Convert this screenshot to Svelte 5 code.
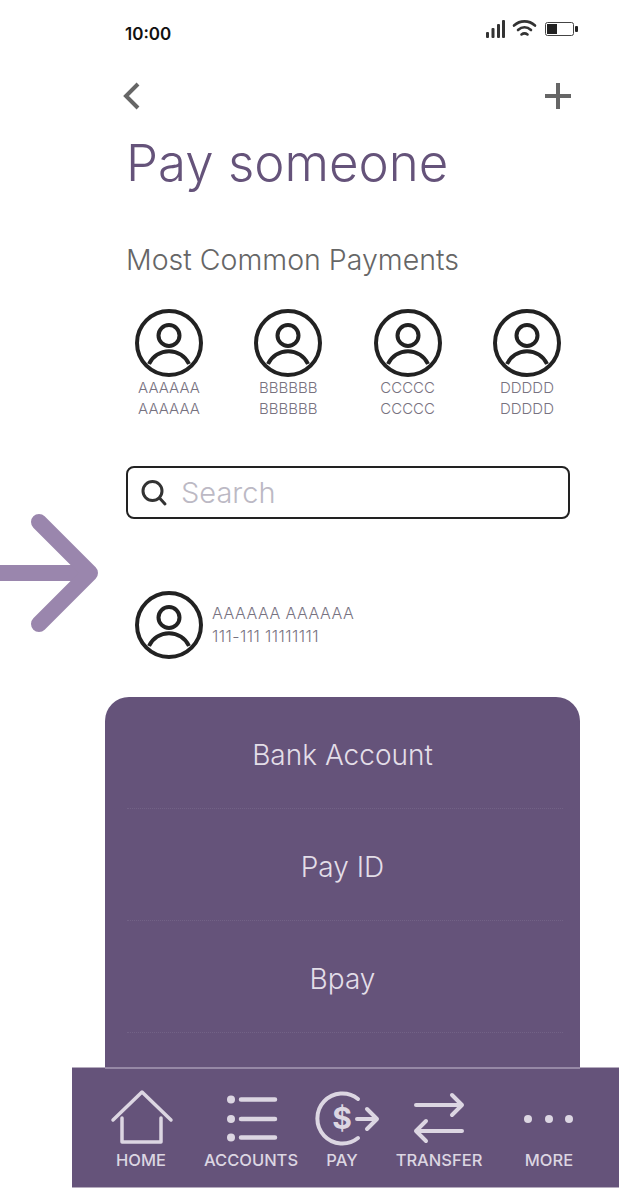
<script>
	const favourites = [
		{ name: "AAAAAA" },
		{ name: "BBBBBB" },
		{ name: "CCCCC" },
		{ name: "DDDDD" },
	];
	const methods = ["Bank Account", "Pay ID", "Bpay"];
</script>

{#snippet avatar()}
	<svg class="avatar" viewBox="0 0 68 68" fill="none" stroke="#222" stroke-width="4">
		<circle cx="34" cy="34" r="32" />
		<circle cx="34" cy="26.5" r="10.5" />
		<path d="M14 55 A22 22 0 0 1 54 55" />
	</svg>
{/snippet}

<div class="screen">
	<svg class="pointer" viewBox="0 0 100 120" fill="none" stroke="#9a86ad" stroke-width="16" stroke-linecap="round" stroke-linejoin="round">
		<path d="M0 59 H88" stroke-linecap="butt" />
		<path d="M39 8 L90 59 L39 110" />
	</svg>

	<div class="status">
		<span class="time">10:00</span>
		<svg class="status-icons" viewBox="0 0 94 20" fill="none">
			<g fill="#333">
				<rect x="0" y="12" width="3" height="6" rx="1" />
				<rect x="5.5" y="8" width="3" height="10" rx="1" />
				<rect x="11" y="4" width="3" height="14" rx="1" />
				<rect x="16" y="0" width="3" height="18" rx="1" />
			</g>
			<g stroke="#333" stroke-width="2.6" stroke-linecap="round">
				<path d="M28 5.5 C34 0 43 0 49 5.5" />
				<path d="M32 10 C36 6.5 41 6.5 45 10" />
				<path d="M35.5 14.5 C37.5 13 39.5 13 41.5 14.5" />
			</g>
			<rect x="59.5" y="2.5" width="28" height="13" rx="2" stroke="#444" />
			<rect x="61" y="4" width="10" height="10" fill="#222" />
			<rect x="89" y="6" width="3" height="6" rx="1" fill="#222" />
		</svg>
	</div>

	<main class="content">
		<div class="topbar">
			<svg width="18" height="28" viewBox="0 0 18 28" fill="none" stroke="#666" stroke-width="4">
				<path d="M15 2 L3 14 L15 26" />
			</svg>
			<svg width="26" height="26" viewBox="0 0 26 26" fill="none" stroke="#666" stroke-width="4">
				<path d="M13 0 V26 M0 13 H26" />
			</svg>
		</div>

		<h1>Pay someone</h1>
		<h2>Most Common Payments</h2>

		<div class="favourites">
			{#each favourites as f}
				<div class="favourite">
					{@render avatar()}
					<span>{f.name}</span>
					<span>{f.name}</span>
				</div>
			{/each}
		</div>

		<div class="search">
			<svg width="28" height="28" viewBox="0 0 28 28" fill="none" stroke="#333" stroke-width="3" stroke-linecap="round">
				<circle cx="12.5" cy="12" r="9.5" />
				<path d="M19.5 19 L25 25" />
			</svg>
			<span>Search</span>
		</div>

		<div class="payee">
			{@render avatar()}
			<div class="payee-text">
				<span>AAAAAA AAAAAA</span>
				<span>111-111 11111111</span>
			</div>
		</div>
	</main>

	<section class="sheet">
		{#each methods as m}
			<div class="method">{m}</div>
		{/each}
	</section>

	<nav>
		<div class="tab">
			<svg viewBox="0 0 70 60" fill="none" stroke="#dcd6e2" stroke-width="3.5" stroke-linecap="round" stroke-linejoin="round">
				<path d="M7 32 L36 4 L65 32" />
				<path d="M16 30 V54 H55 V30" />
			</svg>
			<span>HOME</span>
		</div>
		<div class="tab">
			<svg viewBox="0 0 70 60" fill="none" stroke="#dcd6e2" stroke-width="4.5" stroke-linecap="round">
				<g fill="#dcd6e2" stroke="none">
					<circle cx="15" cy="11.5" r="4" />
					<circle cx="15" cy="31" r="4" />
					<circle cx="15" cy="49.5" r="4" />
				</g>
				<path d="M25 11.5 H59 M25 31 H59 M25 49.5 H59" />
			</svg>
			<span>ACCOUNTS</span>
		</div>
		<div class="tab">
			<svg class="pay" viewBox="0 0 70 60" fill="none" stroke="#dcd6e2" stroke-width="4" stroke-linecap="round" stroke-linejoin="round">
				<path d="M51 11 A25 25 0 1 0 51 50" />
				<text x="35" y="41" text-anchor="middle" fill="#dcd6e2" stroke="none">$</text>
				<path d="M50 31 H69 M60 21 L70 31 L60 41" />
			</svg>
			<span>PAY</span>
		</div>
		<div class="tab">
			<svg viewBox="0 0 70 60" fill="none" stroke="#dcd6e2" stroke-width="4" stroke-linecap="round" stroke-linejoin="round">
				<path d="M12 17 H58 M48 7 L58 17 L48 27" />
				<path d="M58 43 H12 M22 33 L12 43 L22 53" />
			</svg>
			<span>TRANSFER</span>
		</div>
		<div class="tab">
			<svg viewBox="0 0 70 60" fill="#dcd6e2">
				<circle cx="14" cy="31" r="4" />
				<circle cx="35" cy="31" r="4" />
				<circle cx="55" cy="31" r="4" />
			</svg>
			<span>MORE</span>
		</div>
	</nav>
</div>

<style>
	:global(body) {
		margin: 0;
		background: white;
	}
	.screen {
		position: relative;
		width: 620px;
		height: 1188px;
		overflow: hidden;
		font-family: Inter, "Liberation Sans", sans-serif;
	}
	.pointer {
		position: absolute;
		left: 0;
		top: 514px;
		width: 100px;
		height: 120px;
	}

	.status {
		display: flex;
		justify-content: space-between;
		padding: 20px 41px 0 125px;
		height: 46px;
		margin-right: -1px;
	}
	.time {
		font-size: 17px;
		font-weight: 600;
		color: #111;
		margin-top: 4px;
	}
	.status-icons {
		width: 94px;
		height: 20px;
	}

	.content {
		padding: 0 50px 0 126px;
	}
	.topbar {
		display: flex;
		justify-content: space-between;
		align-items: center;
		height: 30px;
		padding-top: 15px;
		margin: 0 -1px 0 -3px;
	}
	h1 {
		margin: 22px 0 0;
		font-size: 51px;
		font-weight: 300;
		line-height: 60px;
		color: #65537a;
	}
	h2 {
		margin: 50px 0 0;
		font-size: 28.5px;
		font-weight: 300;
		line-height: 34px;
		color: #666;
	}

	.favourites {
		display: flex;
		justify-content: space-between;
		padding: 0 9px;
		margin-top: 32px;
	}
	.favourite {
		display: flex;
		flex-direction: column;
		align-items: center;
		width: 68px;
		font-size: 15px;
		font-weight: 300;
		line-height: 21px;
		color: #77727f;
	}
	.avatar {
		width: 68px;
		height: 68px;
		flex: none;
	}

	.search {
		display: flex;
		align-items: center;
		gap: 13px;
		box-sizing: border-box;
		height: 53px;
		margin-top: 47px;
		padding-left: 12px;
		border: 2px solid #222;
		border-radius: 8px;
		font-size: 29px;
		font-weight: 300;
		color: #bcb9c4;
	}

	.payee {
		display: flex;
		align-items: center;
		gap: 9px;
		margin-top: 72px;
		padding-left: 9px;
	}
	.payee-text {
		display: flex;
		flex-direction: column;
		font-size: 16px;
		font-weight: 300;
		letter-spacing: 0.45px;
		line-height: 23px;
		color: #77727f;
	}

	.sheet {
		position: relative;
		z-index: 1;
		box-sizing: border-box;
		width: 475px;
		height: 372px;
		margin: 38px 0 0 105px;
		padding-top: 2px;
		border-radius: 24px 24px 0 0;
		border-bottom: 2px solid #9688a6;
		background: #65537a;
	}
	.method {
		position: relative;
		height: 112px;
		line-height: 112px;
		text-align: center;
		font-size: 28px;
		font-weight: 300;
		color: #e3dee8;
	}
	.method::after {
		content: "";
		position: absolute;
		left: 22px;
		right: 17px;
		bottom: 2px;
		border-bottom: 1px dotted rgba(255, 255, 255, 0.09);
	}

	nav {
		display: grid;
		grid-template-columns: 138px 82px 100px 94px 126px;
		box-sizing: border-box;
		width: 547px;
		height: 121px;
		margin: -2px 0 0 72px;
		padding-top: 20px;
		border-top: 1px solid #b5abbe;
		border-bottom: 1px solid #b5abbe;
		background: #65537a;
	}
	.tab {
		display: flex;
		flex-direction: column;
		align-items: center;
		color: #dcd6e2;
		font-size: 16.5px;
		font-weight: 500;
		white-space: nowrap;
	}
	.tab svg {
		width: 70px;
		height: 60px;
		flex: none;
		overflow: visible;
	}
	.tab span {
		margin-top: 2px;
		line-height: 20px;
	}
	.pay text {
		font-size: 30px;
		font-weight: 700;
		font-family: Inter, sans-serif;
	}
</style>
